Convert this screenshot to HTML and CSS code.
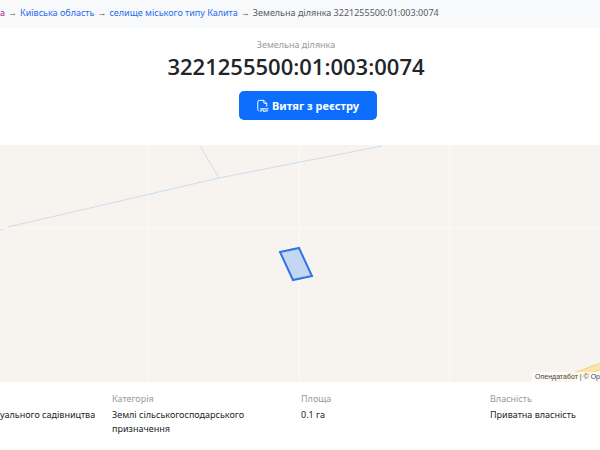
FILE: index.html
```html
<!DOCTYPE html>
<html lang="uk">
<head>
  <meta charset="UTF-8">
  <meta name="viewport" content="width=device-width, initial-scale=1.0">
  <title>Земельна ділянка 3221255500:01:003:0074</title>
  <link rel="stylesheet" href="styles.css">
</head>
<body>

  <nav class="breadcrumbs">
    <a class="visited" href="#">а</a>
    <span>→</span>
    <a href="#">Київська область</a>
    <span>→</span>
    <a href="#">селище міського типу Калита</a>
    <span>→</span>
    <span>Земельна ділянка 3221255500:01:003:0074</span>
  </nav>

  <header class="heading">
    <p class="label">Земельна ділянка</p>
    <h1>3221255500:01:003:0074</h1>
    <button class="btn" type="button">
      <svg class="btn-icon" viewBox="0 0 16 16" aria-hidden="true">
        <path d="M3 14.500a2 2 0 0 1-2-2v-10a2 2 0 0 1 2-2h6l4 4V9M9 .5v3a1 1 0 0 0 1 1h3" />
        <text x="4" y="16">PDF</text>
      </svg>
      Витяг з реєстру
    </button>
  </header>

  <section class="map">
    <svg class="map-canvas" viewBox="0 0 600 237" preserveAspectRatio="xMidYMid slice" role="img" aria-label="Мапа">
      <path class="tile-line" d="M148 0V237M299 0V237M450 0V237M0 83H600" />
      <path class="river" d="M0 85L4 84M8 82L219 33L382 1M200 1L219 33" />
      <path class="road-edge" d="M545 242L604 220" />
      <path class="road" d="M545 242L604 220" />
      <path class="parcel" d="M280 107L299 103L312 131L293 135Z" />
    </svg>
    <div class="attribution">Опендатабот | © Op</div>
  </section>

  <dl class="details">
    <div>
      <dt>&nbsp;</dt>
      <dd>уального садівництва</dd>
    </div>
    <div>
      <dt>Категорія</dt>
      <dd>Землі сільськогосподарського призначення</dd>
    </div>
    <div>
      <dt>Площа</dt>
      <dd>0.1 га</dd>
    </div>
    <div>
      <dt>Власність</dt>
      <dd>Приватна власність</dd>
    </div>
  </dl>

</body>
</html>
```

FILE: styles.css
```css
* {
  box-sizing: border-box;
}
body {
  margin: 0;
  font-family: "Noto Sans", "Open Sans", sans-serif;
  font-size: 9px;
  line-height: 14px;
  color: #212529;
  background: #fff;
  overflow-x: hidden;
}
.breadcrumbs {
  display: flex;
  gap: 3px;
  padding: 6px 0 8px;
  background: #f8f9fa;
  color: #555b61;
  white-space: nowrap;
}
.breadcrumbs a {
  color: #1f6cf0;
  text-decoration: none;
}
.breadcrumbs .visited {
  color: #a02c98;
}
.heading {
  display: flex;
  flex-direction: column;
  align-items: center;
  padding: 10px 8px 25px 0;
}
.label {
  margin: 0;
  color: #999;
}
h1 {
  margin: 0 0 10px;
  font-family: "Open Sans", "Noto Sans", sans-serif;
  font-size: 22px;
  line-height: 29px;
  font-weight: 600;
}
.btn {
  display: flex;
  align-items: center;
  justify-content: center;
  gap: 3px;
  margin-left: 24px;
  padding: 7px 18px;
  border: none;
  border-radius: 5px;
  background: #0d6efd;
  color: #fff;
  font-family: inherit;
  font-size: 11px;
  font-weight: 700;
  line-height: 15px;
  cursor: pointer;
}
.btn:hover {
  background: #0b5ed7;
}
.btn-icon {
  width: 12px;
  height: 12px;
  overflow: visible;
}
.btn-icon path {
  fill: none;
  stroke: #fff;
  stroke-width: 1.3;
}
.btn-icon text {
  fill: #fff;
  font-size: 6px;
  font-weight: 700;
}
.map {
  position: relative;
  height: 237px;
  background: #f7f4f0;
  overflow: hidden;
}
.map-canvas {
  display: block;
  width: 100%;
  height: 100%;
}
.map-canvas path {
  fill: none;
}
.map-canvas .tile-line {
  stroke: #fbf9f7;
}
.map-canvas .river {
  stroke: #cbddec;
}
.map-canvas .road-edge {
  stroke: #f0cf80;
  stroke-width: 7;
}
.map-canvas .road {
  stroke: #fbe6a8;
  stroke-width: 5;
}
.map-canvas .parcel {
  fill: #c5d6f3;
  stroke: #2f74e8;
  stroke-width: 2;
}
.attribution {
  position: absolute;
  right: 0;
  bottom: 0;
  padding-left: 3px;
  background: rgba(255, 255, 255, 0.7);
  color: #444;
  font-family: "Liberation Sans", Arial, sans-serif;
  font-size: 7px;
  line-height: 10px;
  white-space: nowrap;
}
.details {
  display: grid;
  grid-template-columns: 112fr 189fr 189fr 110fr;
  margin: 0;
  padding-top: 10px;
}
.details dt {
  margin-bottom: 2px;
  color: #999;
}
.details dd {
  margin: 0;
  padding-right: 16px;
}
```
